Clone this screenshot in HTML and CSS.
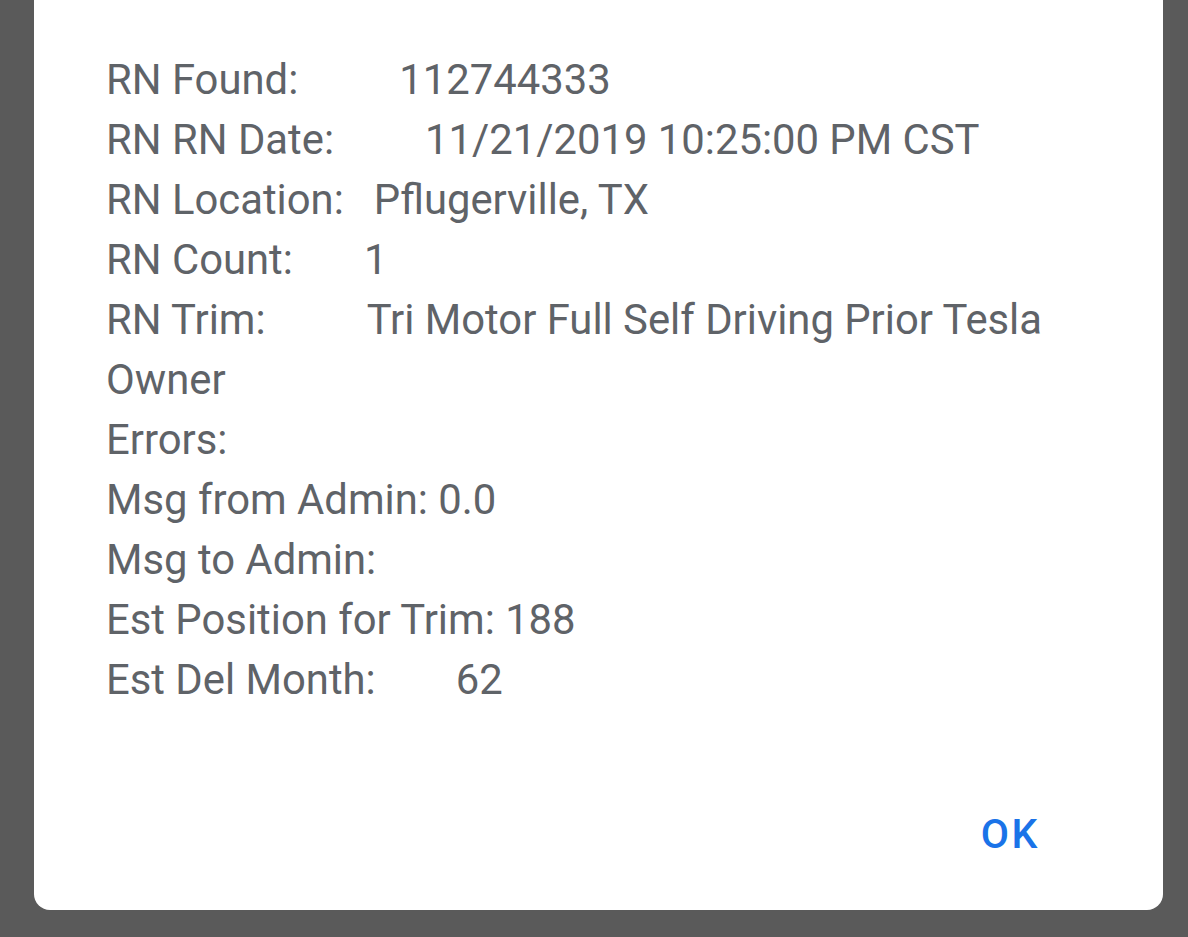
FILE: index.html
```html
<!DOCTYPE html>
<html>
<head>
<meta charset="utf-8">
<link rel="stylesheet" href="styles.css">
</head>
<body>
<div class="dialog">
  <div class="content">
    <div class="line"><span>RN Found:</span><span class="v" style="margin-left:101px">112744333</span></div>
    <div class="line"><span>RN RN Date:</span><span class="v" style="margin-left:91px">11/21/2019 10:25:00 PM CST</span></div>
    <div class="line"><span>RN Location:</span><span class="v" style="margin-left:30px">Pflugerville, TX</span></div>
    <div class="line"><span>RN Count:</span><span class="v" style="margin-left:71px">1</span></div>
    <div class="line"><span>RN Trim:</span><span class="v" style="margin-left:101px">Tri Motor Full Self Driving Prior Tesla</span></div>
    <div class="line">Owner</div>
    <div class="line">Errors:</div>
    <div class="line">Msg from Admin: 0.0</div>
    <div class="line">Msg to Admin:</div>
    <div class="line">Est Position for Trim: 188</div>
    <div class="line"><span>Est Del Month:</span><span class="v" style="margin-left:80px">62</span></div>
  </div>
  <div class="actions">
    <button class="ok">OK</button>
  </div>
</div>
</body>
</html>
```
FILE: styles.css
```css
html, body {
  margin: 0;
  padding: 0;
}
body {
  background: #5a5a5a;
  width: 1188px;
  height: 937px;
  overflow: hidden;
  font-family: Roboto, "Noto Sans", sans-serif;
}
.dialog {
  margin: -20px 0 0 34px;
  width: 1129px;
  height: 930px;
  background: #ffffff;
  border-radius: 0 0 16px 16px;
  box-sizing: border-box;
  display: flex;
  flex-direction: column;
}
.content {
  padding: 70px 0 0 72px;
  color: #5f6368;
  font-size: 41.8px;
  line-height: 60px;
}
.line {
  white-space: nowrap;
}
.actions {
  margin-top: auto;
  display: flex;
  justify-content: flex-end;
  padding: 0 123px 46px 0;
}
.ok {
  border: none;
  background: none;
  padding: 0;
  font-family: Roboto, sans-serif;
  font-weight: 500;
  font-size: 41px;
  color: #1a73e8;
  letter-spacing: 2.5px;
  line-height: 60px;
}
```
